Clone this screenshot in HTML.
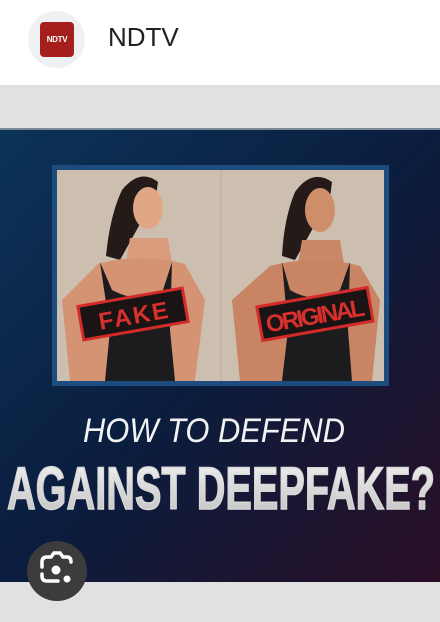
<!DOCTYPE html>
<html><head><meta charset="utf-8"><style>
html,body{margin:0;padding:0;width:440px;height:622px;overflow:hidden;background:#fff;font-family:"Liberation Sans",sans-serif}
.hdr{position:absolute;left:0;top:0;width:440px;height:85px;background:#fff}
.logo{position:absolute;left:28px;top:11px;width:57px;height:57px;border-radius:50%;background:#eef0f1}
.logo div{position:absolute;left:12px;top:11px;width:34px;height:35px;border-radius:4px;background:#a5201c;color:#fff;font-size:8px;font-weight:bold;text-align:center;line-height:35px;letter-spacing:-.3px}
.name{position:absolute;left:108px;top:22px;font-size:26px;color:#202124}
.g1{position:absolute;left:0;top:85px;width:440px;height:43px;background:#e1e1e1}
.g2{position:absolute;left:0;top:582px;width:440px;height:40px;background:#e1e1e1}
svg.main{position:absolute;left:0;top:128px}
svg.cam{position:absolute;left:26px;top:540px}
</style></head><body>
<div class="hdr"><div class="logo"><div>NDTV</div></div><div class="name">NDTV</div></div>
<div class="g1"></div>
<svg class="main" width="440" height="454" viewBox="0 128 440 454">
<defs>
<linearGradient id="bg" x1="0" y1="0" x2="1" y2="1">
<stop offset="0" stop-color="#0b3358"/><stop offset=".5" stop-color="#0b1d3e"/><stop offset="1" stop-color="#2a0e26"/>
</linearGradient>
<linearGradient id="txt" x1="0" y1="0" x2="0" y2="1"><stop offset="0" stop-color="#f4f4f4"/><stop offset="1" stop-color="#bfbfbf"/></linearGradient>
</defs>
<rect x="0" y="128" width="440" height="454" fill="url(#bg)"/>
<rect x="0" y="128" width="440" height="2" fill="#7a8a96"/>
<rect x="52" y="165" width="337" height="221" fill="#1c4d7e"/>
<rect x="57" y="170" width="327" height="211" fill="#cdbfb0"/>
<rect x="220" y="170" width="2" height="211" fill="#c3b6a8"/>
<g>
<path d="M122 190 Q140 168 158 182 L156 195 L120 260 L106 256 Q110 215 122 190Z" fill="#241a17"/>
<ellipse cx="148" cy="208" rx="15" ry="21" fill="#e0a785"/>
<path d="M130 238 L168 238 L172 262 L126 262Z" fill="#d99c7c"/>
<path d="M98 264 Q140 252 185 264 L205 300 L195 381 L70 381 L62 300Z" fill="#d49474"/>
<path d="M100 262 L110 330 L105 381 L175 381 L170 330 L172 262 L163 290 Q140 305 112 290Z" fill="#1c1c1e"/>
</g>
<g>
<path d="M295 192 Q312 168 332 182 L330 198 L295 260 L282 256 Q284 218 295 192Z" fill="#241a17"/>
<ellipse cx="320" cy="210" rx="15" ry="22" fill="#cf8e6a"/>
<path d="M302 240 L340 240 L344 264 L298 264Z" fill="#c98866"/>
<path d="M270 266 Q315 254 360 266 L380 300 L372 381 L240 381 L232 300Z" fill="#c98464"/>
<path d="M282 262 L288 330 L282 381 L352 381 L348 330 L350 262 L340 290 Q315 305 290 290Z" fill="#1c1c1e"/>
</g>
<g transform="rotate(-10 133 314)"><rect x="80" y="297" width="106" height="34" fill="#1a1414" stroke="#d32a2a" stroke-width="3"/>
<text x="133" y="324" text-anchor="middle" font-family="Liberation Sans" font-weight="bold" font-size="24" fill="#d8302c" textLength="70">FAKE</text></g>
<g transform="rotate(-10 315 314)"><rect x="259" y="297" width="112" height="34" fill="#1a1414" stroke="#d32a2a" stroke-width="3"/>
<text x="315" y="324" text-anchor="middle" font-family="Liberation Sans" font-weight="bold" font-size="24" fill="#d8302c" textLength="100">ORIGINAL</text></g>
<text x="83" y="442" font-family="Liberation Sans" font-style="italic" font-size="34" fill="#f2f2f2" textLength="262" lengthAdjust="spacingAndGlyphs">HOW TO DEFEND</text>
<text x="7" y="509" font-family="Liberation Sans Narrow, Liberation Sans" font-weight="bold" font-size="60" fill="url(#txt)" stroke="#d8d8d8" stroke-width="1.5" textLength="428" lengthAdjust="spacingAndGlyphs">AGAINST DEEPFAKE?</text>
</svg>
<div class="g2"></div>
<svg class="cam" width="62" height="62" viewBox="26 540 62 62">
<circle cx="57" cy="571" r="30" fill="#3c3c3e"/>
<path d="M27 571 A30 30 0 0 0 87 571 L87 582 L27 582Z" fill="none"/>
<g fill="none" stroke="#fff" stroke-width="3.5" stroke-linecap="round">
<path d="M42 567 V562 Q42 557 47 557 H51 L54 553 H60 L63 557 H67 Q71 557 71 562"/>
<path d="M42 574 V576 Q42 581 47 581 H58"/>
</g>
<circle cx="56" cy="570" r="4.5" fill="#fff"/>
<circle cx="67" cy="579" r="3.5" fill="#fff"/>
</svg>
</body></html>
